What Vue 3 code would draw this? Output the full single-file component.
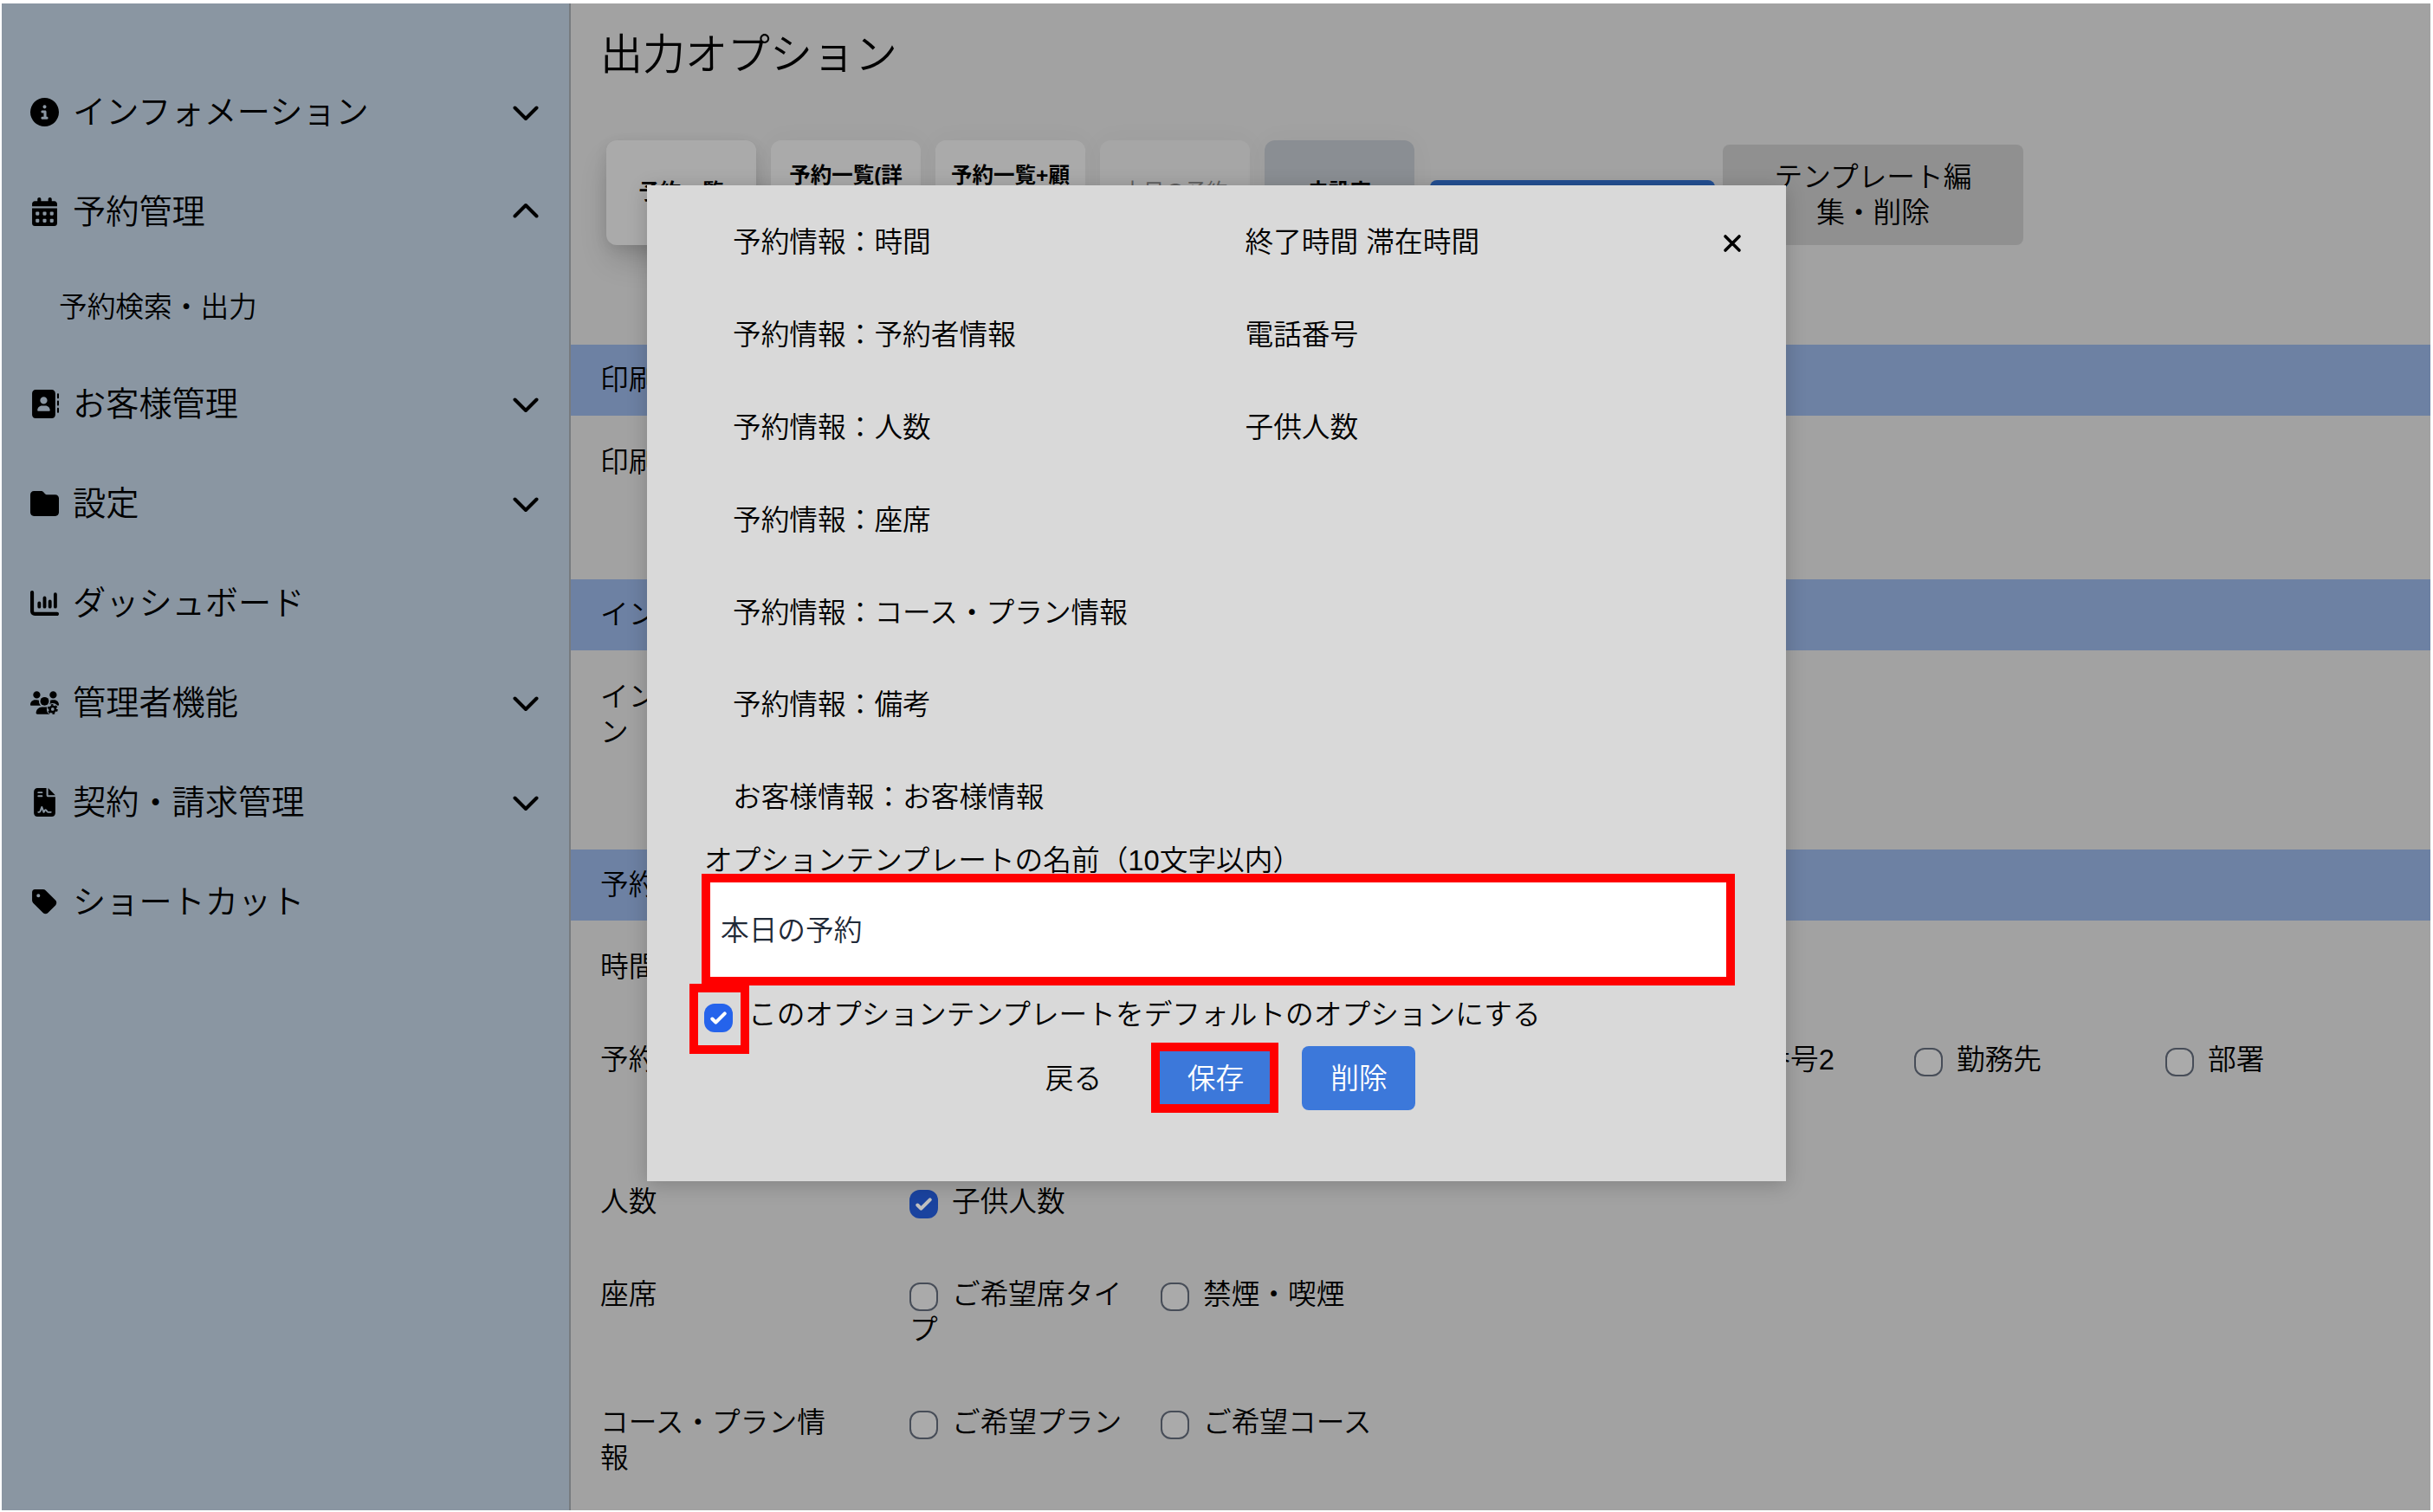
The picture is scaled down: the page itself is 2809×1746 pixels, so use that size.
<template>
  <div class="page">
    <nav class="sidebar">
      <ul class="menu">
        <template v-for="item in menuItems" :key="item.name">
          <li class="menuItem">
            <svg class="menuIcon" :viewBox="item.viewBox">
              <path v-for="(d, index) in item.paths" :key="index" :d="d"/>
              <path v-for="(d, index) in item.lines || []" :key="'l' + index" :d="d" class="iconLine"/>
              <path v-for="(d, index) in item.cuts || []" :key="'c' + index" :d="d" class="iconCut"/>
              <g v-if="item.gear">
                <circle cx="500" cy="400" r="134" class="iconGap"/>
                <circle cx="500" cy="400" r="62" class="iconGear"/>
                <circle cx="500" cy="400" r="98" class="iconTeeth"/>
              </g>
            </svg>
            <span class="menuName">{{ item.name }}</span>
            <svg v-if="item.arrow" class="arrow" :class="{'open': item.arrow === 'up'}" viewBox="0 0 30 18">
              <path d="M2.5 2.5L15 15L27.5 2.5"/>
            </svg>
          </li>
          <li v-for="child in item.children || []" :key="child" class="subItem">{{ child }}</li>
        </template>
      </ul>
    </nav>

    <main class="content">
      <h1 class="title">出力オプション</h1>
      <div class="templates">
        <div v-for="template in templates" :key="template.name" class="template" :class="template.class">
          {{ template.name }}
        </div>
        <button class="createButton">テンプレート作成</button>
        <button class="editButton">テンプレート編<br>集・削除</button>
      </div>

      <section v-for="section in sections" :key="section.name" class="section">
        <h2 class="sectionName">{{ section.name }}</h2>
        <div class="rows">
          <div v-for="row in section.rows" :key="row.name" class="row" :class="row.size">
            <div class="rowName">{{ row.name }}</div>
            <div class="options">
              <label v-for="option in row.options" :key="option.name" class="option">
                <span class="checkbox" :class="{'checked': option.checked}">
                  <svg v-if="option.checked" viewBox="0 0 16 16"><path :d="checkPath"/></svg>
                </span>{{ option.name }}
              </label>
            </div>
          </div>
        </div>
      </section>
    </main>

    <div class="modal">
      <svg class="close" viewBox="0 0 22 22"><path d="M3 3L19 19M19 3L3 19"/></svg>
      <dl class="summary">
        <div v-for="row in summary" :key="row.name" class="summaryRow">
          <dt>{{ row.name }}</dt>
          <dd>{{ row.value }}</dd>
        </div>
      </dl>
      <div class="nameLabel">オプションテンプレートの名前（10文字以内）</div>
      <div class="nameInput">{{ templateName }}</div>
      <div class="defaultRow">
        <div class="defaultMark">
          <span class="checkbox bright checked">
            <svg viewBox="0 0 16 16"><path :d="checkPath"/></svg>
          </span>
        </div>
        <span class="defaultText">このオプションテンプレートをデフォルトのオプションにする</span>
      </div>
      <div class="buttons">
        <button class="back">戻る</button>
        <button class="save">保存</button>
        <button class="delete">削除</button>
      </div>
    </div>
  </div>
</template>

<script setup>
import {ref} from 'vue';

const checkPath = 'M12.207 4.793a1 1 0 010 1.414l-5 5a1 1 0 01-1.414 0l-2-2a1 1 0 011.414-1.414L6.5 9.086l4.293-4.293a1 1 0 011.414 0z';

const templateName = ref('本日の予約');

const menuItems = ref([
  {
    name: 'インフォメーション',
    arrow: 'down',
    viewBox: '0 0 512 512',
    paths: ['M256 512A256 256 0 1 0 256 0a256 256 0 1 0 0 512zM216 336l24 0 0-64-24 0c-13.3 0-24-10.7-24-24s10.7-24 24-24l48 0c13.3 0 24 10.7 24 24l0 88 8 0c13.3 0 24 10.7 24 24s-10.7 24-24 24l-80 0c-13.3 0-24-10.7-24-24s10.7-24 24-24zm40-208a32 32 0 1 1 0 64 32 32 0 1 1 0-64z']
  },
  {
    name: '予約管理',
    arrow: 'up',
    viewBox: '0 0 448 512',
    paths: [
      'M128 0c17.7 0 32 14.3 32 32V64H288V32c0-17.7 14.3-32 32-32s32 14.3 32 32V64h48c26.5 0 48 21.5 48 48v48H0V112C0 85.5 21.5 64 48 64H96V32c0-17.7 14.3-32 32-32z',
      'M0 192H448V464c0 26.5-21.5 48-48 48H48c-26.5 0-48-21.5-48-48V192zM80 256a16 16 0 0 0-16 16v32a16 16 0 0 0 16 16h32a16 16 0 0 0 16-16v-32a16 16 0 0 0-16-16zM208 256a16 16 0 0 0-16 16v32a16 16 0 0 0 16 16h32a16 16 0 0 0 16-16v-32a16 16 0 0 0-16-16zM336 256a16 16 0 0 0-16 16v32a16 16 0 0 0 16 16h32a16 16 0 0 0 16-16v-32a16 16 0 0 0-16-16zM80 384a16 16 0 0 0-16 16v32a16 16 0 0 0 16 16h32a16 16 0 0 0 16-16v-32a16 16 0 0 0-16-16zM208 384a16 16 0 0 0-16 16v32a16 16 0 0 0 16 16h32a16 16 0 0 0 16-16v-32a16 16 0 0 0-16-16zM336 384a16 16 0 0 0-16 16v32a16 16 0 0 0 16 16h32a16 16 0 0 0 16-16v-32a16 16 0 0 0-16-16z'
    ],
    children: ['予約検索・出力']
  },
  {
    name: 'お客様管理',
    arrow: 'down',
    viewBox: '0 0 512 512',
    paths: ['M96 0C60.7 0 32 28.7 32 64V448c0 35.3 28.7 64 64 64H384c35.3 0 64-28.7 64-64V64c0-35.3-28.7-64-64-64H96zM208 288h64c44.2 0 80 35.8 80 80c0 8.8-7.2 16-16 16H144c-8.8 0-16-7.2-16-16c0-44.2 35.8-80 80-80zm-32-96a64 64 0 1 1 128 0 64 64 0 1 1 -128 0zM512 80c0-8.8-7.2-16-16-16s-16 7.2-16 16v64c0 8.8 7.2 16 16 16s16-7.2 16-16V80zM496 192c-8.8 0-16 7.2-16 16v64c0 8.8 7.2 16 16 16s16-7.2 16-16V208c0-8.8-7.2-16-16-16zm16 144c0-8.8-7.2-16-16-16s-16 7.2-16 16v64c0 8.8 7.2 16 16 16s16-7.2 16-16V336z']
  },
  {
    name: '設定',
    arrow: 'down',
    viewBox: '0 0 512 512',
    paths: ['M64 480H448c35.3 0 64-28.7 64-64V160c0-35.3-28.7-64-64-64H288c-10.1 0-19.6-4.7-25.6-12.8L243.2 57.6C231.1 41.5 212.1 32 192 32H64C28.7 32 0 60.7 0 96V416c0 35.3 28.7 64 64 64z']
  },
  {
    name: 'ダッシュボード',
    viewBox: '0 0 512 512',
    paths: ['M32 32c17.7 0 32 14.3 32 32V400c0 8.8 7.2 16 16 16H480c17.7 0 32 14.3 32 32s-14.3 32-32 32H80c-44.2 0-80-35.8-80-80V64C0 46.3 14.3 32 32 32z'],
    lines: ['M160 256V320M256 160V320M352 224V320M448 96V320']
  },
  {
    name: '管理者機能',
    arrow: 'down',
    viewBox: '0 0 640 512',
    paths: [
      'M144 160A80 80 0 1 0 144 0a80 80 0 1 0 0 160zm368 0A80 80 0 1 0 512 0a80 80 0 1 0 0 160z',
      'M0 298.7C0 310.4 9.6 320 21.3 320H235.4c-26.6-23.5-43.3-57.8-43.3-96c0-7.6 .7-15 1.9-22.3c-13.6-6.3-28.7-9.7-44.6-9.7H106.7C47.8 192 0 239.8 0 298.7z',
      'M405 320H618.7c11.7 0 21.3-9.6 21.3-21.3C640 239.8 592.2 192 533.3 192H490.7c-15.9 0-31 3.5-44.6 9.7c1.3 7.2 1.9 14.7 1.9 22.3c0 38.2-16.8 72.5-43 96z',
      'M320 320a96 96 0 1 0 0-192a96 96 0 1 0 0 192z',
      'M261.3 352C187.7 352 128 411.7 128 485.3c0 14.7 11.9 26.7 26.7 26.7H440V352z'
    ],
    gear: true
  },
  {
    name: '契約・請求管理',
    arrow: 'down',
    viewBox: '0 0 384 512',
    paths: ['M64 0C28.7 0 0 28.7 0 64V448c0 35.3 28.7 64 64 64H320c35.3 0 64-28.7 64-64V160H256c-17.7 0-32-14.3-32-32V0H64zM256 0V128H384L256 0z'],
    cuts: ['M80 80H144M80 144H144', 'M80 432H92C104 432 112 424 116 412L142 340L176 432L200 396C212 380 224 400 232 414C238 428 246 432 256 432H304']
  },
  {
    name: 'ショートカット',
    viewBox: '0 0 448 512',
    paths: ['M0 80V229.5c0 17 6.7 33.3 18.7 45.3l176 176c25 25 65.5 25 90.5 0L418.7 317.3c25-25 25-65.5 0-90.5l-176-176c-12-12-28.3-18.7-45.3-18.7H48C21.5 32 0 53.5 0 80zm112 32a32 32 0 1 1 0 64 32 32 0 1 1 0-64z']
  }
]);

const templates = ref([
  {name: '予約一覧', class: 'floating'},
  {name: '予約一覧(詳細)', class: ''},
  {name: '予約一覧+顧客情報', class: ''},
  {name: '本日の予約', class: 'faded'},
  {name: '未設定', class: 'selected'}
]);

const sections = ref([
  {
    name: '印刷設定',
    rows: [{name: '印刷方向', size: '', options: []}]
  },
  {
    name: 'インフォメーション',
    rows: [{name: 'インフォメーション', size: '', options: []}]
  },
  {
    name: '予約情報',
    rows: [
      {
        name: '時間',
        size: 'short',
        options: [{name: '終了時間', checked: true}, {name: '滞在時間', checked: true}]
      },
      {
        name: '予約者情報',
        size: 'tall',
        options: [
          {name: 'フリガナ'}, {name: '敬称'}, {name: '電話番号', checked: true},
          {name: '電話番号2'}, {name: '勤務先'}, {name: '部署'}
        ]
      },
      {name: '人数', size: 'short', options: [{name: '子供人数', checked: true}]},
      {name: '座席', size: 'middle', options: [{name: 'ご希望席タイプ'}, {name: '禁煙・喫煙'}]},
      {name: 'コース・プラン情報', size: '', options: [{name: 'ご希望プラン'}, {name: 'ご希望コース'}]}
    ]
  }
]);

const summary = ref([
  {name: '予約情報：時間', value: '終了時間 滞在時間'},
  {name: '予約情報：予約者情報', value: '電話番号'},
  {name: '予約情報：人数', value: '子供人数'},
  {name: '予約情報：座席', value: ''},
  {name: '予約情報：コース・プラン情報', value: ''},
  {name: '予約情報：備考', value: ''},
  {name: 'お客様情報：お客様情報', value: ''}
]);
</script>

<style>
body {
  margin: 0;
  background-color: #fff;
}
</style>

<style scoped>
* {
  box-sizing: border-box;
}

.page {
  position: relative;
  display: flex;
  width: 2809px;
  height: 1746px;
  padding: 4px 3px 2px 2px;
  overflow: hidden;
  font-family: "Liberation Sans", "Noto Sans CJK JP", sans-serif;
  font-size: 32.7px;
  font-weight: 350;
  line-height: 41px;
  color: #000;
}

button {
  border: none;
  font: inherit;
  color: inherit;
  padding: 0;
}

/* SIDEBAR */
.sidebar {
  flex: none;
  width: 657px;
  background-color: #8a96a2;
  border-right: 2px solid #777b7f;
}

.menu {
  list-style: none;
  margin: 0;
  padding: 68px 35px 0 33px;
}

.menuItem {
  display: flex;
  align-items: center;
  height: 115px;
  font-size: 38.2px;
}

.menuIcon {
  width: 33px;
  height: 33px;
  margin-right: 16px;
}

.iconLine {
  fill: none;
  stroke: #000;
  stroke-width: 60;
  stroke-linecap: round;
}

.iconCut {
  fill: none;
  stroke: #8a96a2;
  stroke-width: 30;
  stroke-linecap: round;
  stroke-linejoin: round;
}

.iconGap {
  fill: #8a96a2;
}

.iconGear {
  fill: none;
  stroke: #000;
  stroke-width: 52;
}

.iconTeeth {
  fill: none;
  stroke: #000;
  stroke-width: 36;
  stroke-dasharray: 51.3 51.3;
}

.menuName {
  flex: 1;
  line-height: 46px;
}

.arrow {
  width: 30px;
  height: 18px;
  margin-top: 3px;
}

.arrow.open {
  margin-top: -4px;
  transform: rotate(180deg);
}

.arrow path {
  fill: none;
  stroke: #000;
  stroke-width: 4;
  stroke-linecap: round;
  stroke-linejoin: round;
}

.subItem {
  height: 107px;
  line-height: 105px;
  padding-left: 33px;
}

/* CONTENT */
.content {
  flex: 1;
  min-width: 0;
  overflow: hidden;
  background-color: #a2a2a2;
}

.title {
  margin: 0;
  padding: 27px 0 0 34px;
  height: 158px;
  font-size: 49px;
  font-weight: 350;
  line-height: 64px;
}

.templates {
  display: flex;
  height: 236px;
  padding-left: 41px;
}

.template {
  display: flex;
  align-items: center;
  justify-content: center;
  flex: none;
  width: 173px;
  height: 121px;
  margin-right: 17px;
  padding: 0 18px 2px;
  border-radius: 12px;
  background-color: #aaa;
  box-shadow: 0 0 30px rgba(0, 0, 0, 0.04);
  font-size: 24.5px;
  font-weight: bold;
  line-height: 38px;
  text-align: center;
}

.template.floating {
  box-shadow: 0 20px 36px -6px rgba(0, 0, 0, 0.2), 0 4px 16px rgba(0, 0, 0, 0.08);
}

.template.faded {
  background-color: #a6a6a6;
  color: #606060;
  font-weight: 400;
}

.template.selected {
  background-color: #8a8e93;
}

.createButton {
  width: 329px;
  height: 75px;
  margin: 46px 9px 0 1px;
  border-radius: 8px;
  background-color: #234f92;
  color: #aaa;
}

.editButton {
  width: 347px;
  height: 116px;
  margin-top: 5px;
  border-radius: 8px;
  background-color: #909090;
}

.sectionName {
  height: 82px;
  margin: 0;
  padding-left: 34px;
  background-color: #6d81a3;
  font-size: 32.7px;
  font-weight: 350;
  line-height: 82px;
}

.rows {
  padding: 33px 0 115px 34px;
}

.row {
  display: flex;
}

.row.short {
  height: 107px;
}

.row.tall {
  height: 164px;
}

.row.middle {
  height: 148px;
}

.rowName {
  flex: none;
  width: 264px;
  margin-right: 93px;
}

.options {
  display: flex;
  gap: 16px;
}

.option {
  width: 274px;
}

.checkbox {
  display: inline-block;
  width: 33px;
  height: 33px;
  margin-right: 16px;
  border: 2.5px solid #474d58;
  border-radius: 12px;
  background-color: #aaa;
  vertical-align: -8px;
  line-height: 0;
}

.checkbox.checked {
  border: none;
  background-color: #1a439f;
}

.checkbox svg {
  width: 33px;
  height: 33px;
  fill: #c0c0c0;
}

.checkbox.bright {
  display: block;
  margin: 0;
  background-color: #2563eb;
}

.checkbox.bright svg {
  fill: #fff;
}

/* MODAL */
.modal {
  position: absolute;
  left: 747px;
  top: 214px;
  width: 1315px;
  height: 1150px;
  padding-top: 12px;
  background-color: #d9d9d9;
  box-shadow: 0 4px 22px rgba(0, 0, 0, 0.2);
}

.close {
  position: absolute;
  top: 56px;
  right: 51px;
  width: 22px;
  height: 22px;
}

.close path {
  fill: none;
  stroke: #000;
  stroke-width: 3.6;
  stroke-linecap: round;
}

.summary {
  margin: 0;
  padding-left: 99px;
}

.summaryRow {
  display: flex;
  height: 106.9px;
  line-height: 107px;
}

.summaryRow dt {
  width: 591.5px;
}

.summaryRow dd {
  margin: 0;
}

.nameLabel {
  height: 35px;
  margin-left: 66px;
  line-height: 39px;
}

.nameInput {
  width: 1193px;
  height: 129px;
  margin-left: 63px;
  padding-left: 12px;
  border: 10px solid #f00;
  background-color: #fff;
  color: #1f2937;
  line-height: 111px;
}

.defaultRow {
  display: flex;
  margin: -2px 0 0 49px;
}

.defaultMark {
  width: 69px;
  height: 81px;
  padding: 13px 7px;
  border: 10px solid #f00;
}

.defaultText {
  padding-top: 15px;
  margin-left: -1px;
}

.buttons {
  display: flex;
  align-items: center;
  height: 81px;
  margin-top: -13px;
  padding-left: 427px;
}

.back {
  width: 131px;
  height: 74px;
  margin-right: 24px;
  padding-top: 1px;
  background-color: transparent;
}

.save {
  width: 147px;
  height: 81px;
  padding: 1px 0 0 2px;
  border: 10px solid #f00;
  background-color: #3c78da;
  color: #fff;
}

.delete {
  width: 131px;
  height: 74px;
  margin-left: 27px;
  padding: 1px 0 0 1px;
  border-radius: 8px;
  background-color: #3c78da;
  color: #fff;
}
</style>
